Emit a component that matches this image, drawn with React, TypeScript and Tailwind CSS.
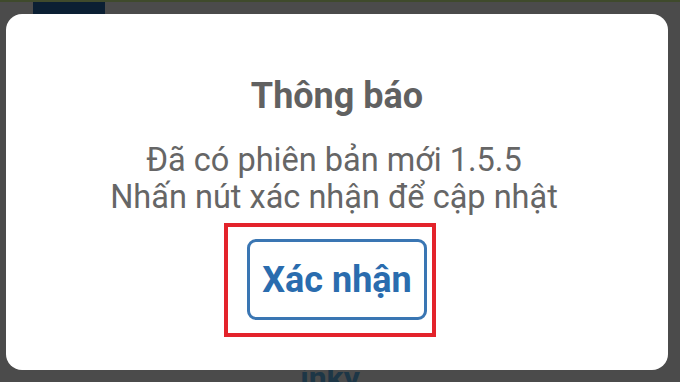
import React from 'react';

const App: React.FC = () => {
  return (
    <div
      className="w-[680px] h-[382px] overflow-hidden bg-[#4b4b4b] flex flex-col"
      style={{ fontFamily: 'Roboto, "Noto Sans", sans-serif' }}>
      {/* background app peeking out above the dialog */}
      <div className="h-[14px] shrink-0 flex flex-col">
        <div className="h-[2px] bg-[#3f4a2c]" />
        <div className="flex flex-1">
          <div className="w-[33px]" />
          <div className="w-[72px] bg-[#0b1f33]" />
        </div>
      </div>

      <div className="px-[6px] pr-[12px] shrink-0">
        <div className="h-[356px] bg-white rounded-[16px] flex flex-col items-center">
          <h1 className="mt-[60px] text-[36px] leading-[44px] font-bold text-[#616161]">Thông báo</h1>
          <div className="mt-[24px] ml-[-6px] text-[32.5px] leading-[37px] text-[#666666] text-center">
            <p>Đã có phiên bản mới 1.5.5</p>
            <p>Nhấn nút xác nhận để cập nhật</p>
          </div>
          <div className="mt-[7px] ml-[-14px] w-[212px] h-[114px] border-[4px] border-[#e3232b] flex justify-start pt-[12px] pl-[19px]">
            <button className="w-[180px] h-[81px] border-[3px] border-[#3a76b3] rounded-[9px] text-[36px] font-bold text-[#2a6cae] flex items-center justify-center">
              Xác nhận
            </button>
          </div>
        </div>
      </div>

      {/* background text below the dialog */}
      <div className="flex-1 flex justify-center overflow-hidden">
        <span className="ml-[-20px] mt-[-8px] text-[32px] leading-[32px] font-bold text-[#1d3646]">inky</span>
      </div>
    </div>
  );
};

export default App;
